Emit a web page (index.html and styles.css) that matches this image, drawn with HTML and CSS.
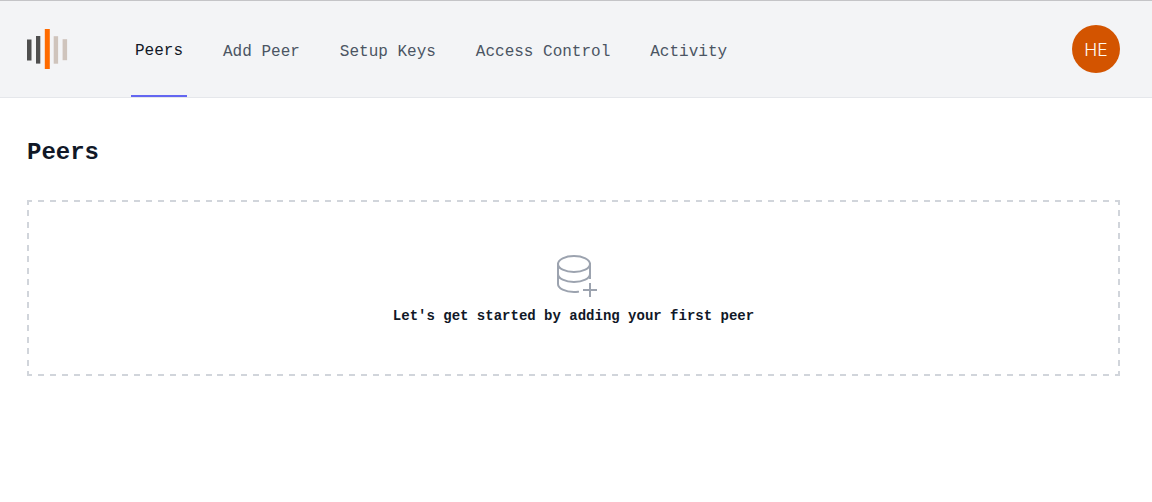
FILE: index.html
```html
<!DOCTYPE html>
<html lang="en">
<head>
<meta charset="utf-8">
<title>Peers</title>
<link rel="stylesheet" href="styles.css">
</head>
<body>
<header class="topbar">
  <svg class="logo" width="42" height="42" viewBox="0 0 42 42" aria-hidden="true">
    <rect x="0" y="11.5" width="4.5" height="21" fill="#4f4f4f"/>
    <rect x="9" y="8" width="4.3" height="27.6" fill="#4f4f4f"/>
    <rect x="17.8" y="1" width="5" height="40" fill="#ff6b00"/>
    <rect x="26.7" y="8.2" width="4.4" height="27.5" fill="#cfc4bc"/>
    <rect x="35.6" y="11.2" width="4.5" height="21" fill="#cfc4bc"/>
  </svg>
  <nav class="tabs">
    <a class="tab tab-active">Peers</a>
    <a class="tab">Add Peer</a>
    <a class="tab">Setup Keys</a>
    <a class="tab">Access Control</a>
    <a class="tab">Activity</a>
  </nav>
  <div class="avatar">HE</div>
</header>
<main class="content">
  <h1 class="title">Peers</h1>
  <div class="empty">
    <svg class="empty-icon" width="48" height="48" viewBox="0 0 48 48" fill="none" stroke="currentColor" stroke-width="2" stroke-linecap="square" aria-hidden="true">
      <path d="M8 14v20c0 4.418 7.163 8 16 8 1.381 0 2.721-.087 4-.252M8 14c0 4.418 7.163 8 16 8s16-3.582 16-8M8 14c0-4.418 7.163-8 16-8s16 3.582 16 8m0 0v14m0-4c0 4.418-7.163 8-16 8S8 28.418 8 24m32 10v6m0 0v6m0-6h6m-6 0h-6"/>
    </svg>
    <span class="empty-text">Let's get started by adding your first peer</span>
  </div>
</main>
</body>
</html>
```
FILE: styles.css
```css
* { box-sizing: border-box; }
body {
  margin: 0;
  background: #fff;
  color: #111827;
  font-family: "Liberation Mono", monospace;
}
.topbar {
  display: flex;
  align-items: center;
  height: 98px;
  padding: 0 32px 0 27px;
  background: #f3f4f6;
  border-top: 1px solid #c4c4c7;
  border-bottom: 1px solid #e5e7eb;
}
.logo { margin-right: 62px; }
.tabs {
  display: flex;
  align-self: stretch;
  gap: 32px;
}
.tab {
  display: flex;
  align-items: center;
  padding: 6px 4px 0;
  font-size: 16px;
  line-height: 24px;
  color: #4b5563;
  white-space: nowrap;
}
.tab-active {
  color: #111827;
  border-bottom: 2px solid #6366f1;
}
.avatar {
  display: flex;
  align-items: center;
  justify-content: center;
  width: 48px;
  height: 48px;
  margin-left: auto;
  border-radius: 50%;
  background: #d35400;
  color: #fffaf0;
  font: 350 17.5px "Inter", sans-serif;
}
.content { padding: 41px 32px 0 27px; }
.title {
  margin: 0 0 33px;
  font-size: 24px;
  line-height: 28px;
  font-weight: 700;
}
/* Dashed outline with evenly spaced 6px dashes on each side */
.empty {
  --dash: #d1d5db;
  --across: repeating-linear-gradient(90deg, var(--dash) 0 5px, transparent 5px 10.967px, var(--dash) 10.967px 11.967px);
  --down: repeating-linear-gradient(180deg, var(--dash) 0 5px, transparent 5px 10.467px, var(--dash) 10.467px 11.467px);
  display: flex;
  flex-direction: column;
  align-items: center;
  height: 176px;
  padding-top: 50px;
  background:
    var(--across) top / 100% 2px no-repeat,
    var(--across) bottom / 100% 2px no-repeat,
    var(--down) left / 2px 100% no-repeat,
    var(--down) right / 2px 100% no-repeat;
}
.empty-icon { color: #9ca3af; }
.empty-text {
  margin-top: 8px;
  font-size: 14px;
  line-height: 20px;
  font-weight: 700;
}
```
